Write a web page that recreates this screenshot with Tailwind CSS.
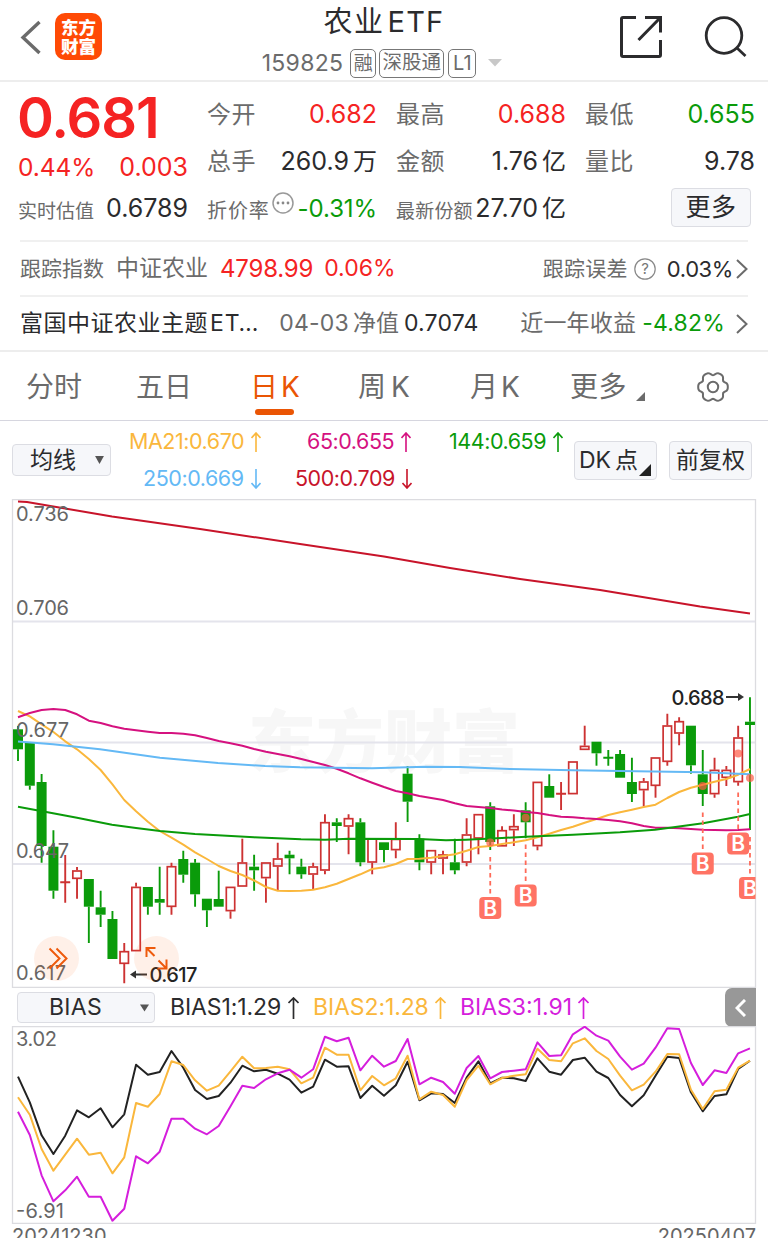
<!DOCTYPE html>
<html lang="zh-CN">
<head>
    <meta charset="UTF-8">
    <meta name="viewport" content="width=device-width, initial-scale=1.0">
    <title>农业ETF 159825</title>
    <script src="https://cdn.jsdelivr.net/npm/@tailwindcss/browser@4"></script>
    <style>
        body {
            font-family: 'Inter', 'Noto Sans CJK SC', sans-serif;
        }
    </style>
</head>
<body class="bg-white text-[#2b2b2d] w-[768px] h-[1238px] overflow-hidden leading-none whitespace-nowrap">

    <!-- Header -->
    <header class="h-[82px] border-b-2 border-[#ededed] flex justify-between">
        <div class="flex items-start pl-[20px] pt-[13px] w-[240px]">
            <svg class="mt-[6px]" width="22" height="36" viewBox="0 0 22 36" fill="none" stroke="#6b6b6b" stroke-width="3.4"><path d="M19.5 3 L3 18.500 L19.500 34"/></svg>
            <div class="ml-[13px] w-[47px] h-[47px] rounded-[10px] bg-[#ff4a05] text-white font-black text-[17.5px] leading-[19px] pt-[5px] text-center">东方<br>财富</div>
        </div>
        <div class="flex flex-col items-center w-[250px]">
            <h1 class="text-[29px] leading-[36px] mt-[4px] flex items-center"><span class="tracking-[1.500px]">农业</span><span class="tracking-[1.200px] ml-[3px]">ETF</span></h1>
            <div class="flex items-center h-[30px] mt-[8px] mr-[4px] text-[#6b6b6b]">
                <span class="text-[23px] tracking-[0.300px]">159825</span>
                <span class="ml-[7px] h-[29px] w-[26px] border border-[#777] rounded-[5px] text-[19px] flex items-center justify-center">融</span>
                <span class="ml-[3px] h-[29px] w-[65px] border border-[#777] rounded-[5px] text-[19.500px] flex items-center justify-center">深股通</span>
                <span class="ml-[4px] h-[29px] w-[28px] border border-[#777] rounded-[5px] text-[20px] flex items-center justify-center">L1</span>
                <svg class="ml-[12px]" width="14" height="8" viewBox="0 0 14 8" fill="#c8c8c8"><path d="M0 0H14L7 7.500z"/></svg>
            </div>
        </div>
        <div class="flex items-start justify-end w-[240px] pt-[15px] pr-[21px]">
            <svg width="44" height="44" viewBox="0 0 44 44" fill="none" stroke="#2b2b2d" stroke-width="3"><path d="M17 2.500H4Q2.500 2.500 2.500 4V40Q2.500 41.500 4 41.500H40Q41.500 41.500 41.500 40V25"/><path d="M26 2.500H41.500V17.500M41 3L19.500 25"/></svg>
            <svg class="ml-[41px]" width="43" height="44" viewBox="0 0 43 44" fill="none" stroke="#2b2b2d" stroke-width="2.800"><circle cx="20" cy="20.500" r="17.800"/><path d="M33 33L41.500 41"/></svg>
        </div>
    </header>

    <!-- Quote -->
    <section class="h-[158px] pl-[19px] pr-[13px] pt-[9px] flex justify-between">
        <div class="w-[169px]">
            <div class="h-[53px] -ml-[2px] flex items-center text-[#f52323] font-semibold text-[56px] tracking-[-1.100px]">0.681</div>
            <div class="h-[47px] -ml-px flex items-center justify-between text-[#f52323]"><span class="text-[24.500px] tracking-[-0.100px]">0.44%</span><span class="text-[25px]">0.003</span></div>
            <div class="h-[34px] -ml-px flex items-center justify-between"><span class="text-[19px] text-[#6b6b6b] pt-[6px]">实时估值</span><span class="text-[25px]">0.6789</span></div>
        </div>
        <div class="w-[170px]">
            <div class="h-[47px] flex items-center justify-between"><span class="text-[24px] tracking-[0.500px] text-[#6b6b6b]">今开</span><span class="text-[25px] text-[#f52323]">0.682</span></div>
            <div class="h-[47px] flex items-center justify-between"><span class="text-[24px] tracking-[0.500px] text-[#6b6b6b]">总手</span><span class="text-[25px]">260.9<span class="text-[24px] ml-[4px]">万</span></span></div>
            <div class="h-[47px] flex items-center"><span class="text-[20px] tracking-[0.900px] text-[#6b6b6b] pt-[5px]">折价率</span>
                <svg class="ml-[2px] -mt-[11px]" width="22" height="22" viewBox="0 0 22 22"><circle cx="11" cy="11" r="10" fill="none" stroke="#999" stroke-width="1.500"/><g fill="#888"><circle cx="6" cy="11" r="1.400"/><circle cx="11" cy="11" r="1.400"/><circle cx="16" cy="11" r="1.400"/></g></svg>
                <span class="ml-auto text-[24px] tracking-[-0.100px] text-[#0a9b0a]">-0.31%</span></div>
        </div>
        <div class="w-[170px]">
            <div class="h-[47px] flex items-center justify-between"><span class="text-[24px] tracking-[0.500px] text-[#6b6b6b]">最高</span><span class="text-[25px] text-[#f52323]">0.688</span></div>
            <div class="h-[47px] flex items-center justify-between"><span class="text-[24px] tracking-[0.500px] text-[#6b6b6b]">金额</span><span class="text-[25px]">1.76<span class="text-[24px] ml-[4px]">亿</span></span></div>
            <div class="h-[47px] flex items-center justify-between"><span class="text-[19px] tracking-[0.200px] text-[#6b6b6b] pt-[6px]">最新份额</span><span class="text-[25px]">27.70<span class="text-[24px] ml-[4px]">亿</span></span></div>
        </div>
        <div class="w-[170px]">
            <div class="h-[47px] flex items-center justify-between"><span class="text-[24px] tracking-[0.500px] text-[#6b6b6b]">最低</span><span class="text-[25px] text-[#0a9b0a]">0.655</span></div>
            <div class="h-[47px] flex items-center justify-between"><span class="text-[24px] tracking-[0.500px] text-[#6b6b6b]">量比</span><span class="text-[25px]">9.78</span></div>
            <div class="h-[45px] flex items-center justify-end pr-[4px]"><button class="w-[80px] h-[39px] bg-[#f6f7fa] border border-[#dcdde3] rounded-[4px] text-[25px] tracking-[0.500px]">更多</button></div>
        </div>
    </section>

    <!-- Tracked index -->
    <section class="mx-[20px] h-[55px] border-t-2 border-[#f0f0f0] flex items-center">
        <span class="text-[21px] text-[#6b6b6b]">跟踪指数</span>
        <span class="ml-[12px] text-[23px] text-[#6b6b6b]">中证农业</span>
        <span class="ml-[12px] text-[24px] tracking-[-0.200px] text-[#f52323]">4798.99</span>
        <span class="ml-[11px] text-[23px] text-[#f52323]">0.06%</span>
        <span class="ml-auto text-[21px] tracking-[0.300px] text-[#6b6b6b]">跟踪误差</span>
        <svg class="ml-[6px]" width="22" height="22" viewBox="0 0 22 22"><circle cx="11" cy="11" r="10.200" fill="none" stroke="#888" stroke-width="1.200"/><text x="11" y="16.300" text-anchor="middle" font-size="15" fill="#777">?</text></svg>
        <span class="ml-[11px] text-[22px] tracking-[-0.400px]">0.03%</span>
        <svg class="ml-[3px]" width="12" height="20" viewBox="0 0 12 20" fill="none" stroke="#6b6b6b" stroke-width="2"><path d="M1 1L10.500 10L1 19"/></svg>
    </section>

    <!-- Fund -->
    <section class="h-[57px] border-b-2 border-[#ededed]">
        <div class="mx-[20px] h-[55px] border-t-2 border-[#f0f0f0] flex items-center">
            <span class="text-[23px] tracking-[0.500px]">富国中证农业主题</span><span class="ml-[2px] text-[23px] tracking-[0.900px]">ET…</span>
            <span class="ml-[20px] text-[23px] text-[#6b6b6b]"><span class="tracking-[0.200px]">04-03</span><span class="ml-[4px]">净值</span></span>
            <span class="ml-[5px] text-[23px] tracking-[0.200px]">0.7074</span>
            <span class="ml-auto text-[23px] tracking-[0.200px] text-[#6b6b6b]">近一年收益</span>
            <span class="ml-[6px] text-[23px] tracking-[0.200px] text-[#0a9b0a]">-4.82%</span>
            <svg class="ml-[11px]" width="12" height="20" viewBox="0 0 12 20" fill="none" stroke="#6b6b6b" stroke-width="2"><path d="M1 1L10.500 10L1 19"/></svg>
        </div>
    </section>

    <!-- Period tabs -->
    <nav class="h-[69px] pt-[2px] border-b border-[#d6d6df] flex items-center text-[28px] text-[#6b6b6b]">
        <span class="ml-[26px] w-[110px]">分时</span>
        <span class="w-[114px]">五日</span>
        <span class="relative w-[108px] text-[#ea5504]">日<span class="ml-[3px]">K</span><span class="absolute left-[5px] top-[36px] w-[39px] h-[6px] rounded-full bg-[#ea5504]"></span></span>
        <span class="w-[112px]">周<span class="ml-[5px]">K</span></span>
        <span class="w-[100px]">月<span class="ml-[3px]">K</span></span>
        <span class="tracking-[0.500px]">更多</span>
        <svg class="ml-[9px] mt-[18px]" width="9" height="9" viewBox="0 0 9 9" fill="#6b6b6b"><path d="M9 0V9H0z"/></svg>
        <svg class="ml-[51px]" width="34" height="34" viewBox="-17 -17 34 34" fill="none" stroke="#6b6b6b" stroke-width="2"><path id="gear" d=""/><circle r="5.200"/></svg>
    </nav>

    <!-- Moving averages -->
    <section class="h-[78px] flex items-center pl-[12px]">
        <div class="w-[99px] h-[32px] bg-[#f6f7fa] border border-[#dcdde3] rounded-[4px] flex items-center justify-between pl-[17px] pr-[6px] text-[23px]">均线
            <svg width="9" height="8" viewBox="0 0 10 9" fill="#555"><path d="M0 0H10L5 9z"/></svg></div>
        <div class="w-[454px] text-[21.500px] tracking-[-0.450px] mr-[9px]">
            <div class="h-[37px] flex items-center">
                <span class="ml-[18px] w-[178px] text-[#fab73c] flex items-center">MA21:0.670<svg class="ml-[7px]" width="10" height="20" viewBox="0 0 10 20" fill="none" stroke="currentColor" stroke-width="1.600"><path d="M5 20V1M0.500 6L5 1L9.500 6"/></svg></span>
                <span class="w-[142px] text-[#d5117f] flex items-center">65:0.655<svg class="ml-[7px]" width="10" height="20" viewBox="0 0 10 20" fill="none" stroke="currentColor" stroke-width="1.600"><path d="M5 20V1M0.500 6L5 1L9.500 6"/></svg></span>
                <span class="text-[#0a9b0a] flex items-center">144:0.659<svg class="ml-[7px]" width="10" height="20" viewBox="0 0 10 20" fill="none" stroke="currentColor" stroke-width="1.600"><path d="M5 20V1M0.500 6L5 1L9.500 6"/></svg></span>
            </div>
            <div class="h-[37px] flex items-center">
                <span class="ml-[32px] w-[152px] text-[#64b9f5] flex items-center">250:0.669<svg class="ml-[7px]" width="10" height="20" viewBox="0 0 10 20" fill="none" stroke="currentColor" stroke-width="1.600"><path d="M5 0V19M0.500 14L5 19L9.500 14"/></svg></span>
                <span class="text-[#c8142a] flex items-center">500:0.709<svg class="ml-[7px]" width="10" height="20" viewBox="0 0 10 20" fill="none" stroke="currentColor" stroke-width="1.600"><path d="M5 0V19M0.500 14L5 19L9.500 14"/></svg></span>
            </div>
        </div>
        <div class="relative w-[83px] h-[39px] bg-[#f6f7fa] border border-[#dcdde3] rounded-[4px] flex items-center pl-[4px] text-[23px]">DK<span class="ml-[4px]">点</span>
            <svg class="absolute right-[5px] bottom-[3px]" width="12" height="12" viewBox="0 0 11 11" fill="#222"><path d="M11 0V11H0z"/></svg></div>
        <div class="ml-[12px] w-[83px] h-[39px] bg-[#f6f7fa] border border-[#dcdde3] rounded-[4px] flex items-center justify-center text-[23px]">前复权</div>
    </section>

    <!-- Candlestick chart -->
    <svg class="block" width="768" height="489" viewBox="0 499 768 489">
        <defs><clipPath id="plot"><rect x="12" y="499" width="743.500" height="489"/></clipPath></defs>
        <text x="248" y="767" font-size="68" font-weight="900" textLength="272" fill="#f7f7f7">东方财富</text>
        <g stroke="#e4e4ec" stroke-width="2"><path d="M12 621.500H756M12 742.500H756M12 864H756"/></g>
        <path d="M12.500 987.500V499.500H755.500V987.500z" fill="none" stroke="#dcdce0" stroke-width="1.300"/>
        <g id="candles"></g>
        <g id="averages" fill="none" stroke-width="2" stroke-linejoin="round"></g>
        <g font-size="20" fill="#666">
            <text x="16" y="520.500" textLength="53">0.736</text>
            <text x="16" y="615" textLength="53">0.706</text>
            <text x="16" y="737" textLength="53">0.677</text>
            <text x="16" y="858" textLength="53">0.647</text>
            <text x="16" y="980" textLength="50">0.617</text>
        </g>
        <g id="signals" clip-path="url(#plot)"></g>
        <g font-size="20" font-weight="500" fill="#222">
            <text x="671.500" y="704.500" textLength="53">0.688</text>
            <text x="149.500" y="982" textLength="48">0.617</text>
        </g>
        <g stroke="#333" stroke-width="1.800" fill="#333"><path d="M726 697H739M147 974.500H135"/><path d="M738 693L744 697L738 701zM136 970.500L130 974.500L136 978.500z" stroke="none"/></g>
        <g fill="#fb6a20" fill-opacity="0.1"><circle cx="56.500" cy="958.500" r="22.500"/><circle cx="156.500" cy="958.500" r="22.500"/></g>
        <g fill="none" stroke="#ee5a0c" stroke-width="2"><path d="M49.500 948.500L59.500 958.500L49.500 968.500M56.500 948.500L66.500 958.500L56.500 968.500"/><path d="M146.500 957V948H155.500M146.500 948L154.500 956M166.500 959.500V968.500H157.500M166.500 968.500L158.500 960.500"/></g>
    </svg>

    <!-- BIAS bar -->
    <section class="h-[38px] pl-[17px] pr-[12px] pt-px flex items-center">
        <div class="w-[138px] h-[31px] bg-[#f6f7fa] border border-[#dcdde3] rounded-[4px] flex items-center justify-between pl-[31px] pr-[5px] text-[23px] tracking-[0.300px]">BIAS
            <svg width="9" height="8" viewBox="0 0 10 8" fill="#555"><path d="M0 0H10L5 8z"/></svg></div>
        <span class="ml-[15px] w-[143px] text-[23px] tracking-[-0.100px] flex items-center">BIAS1:1.29<svg class="ml-[7px]" width="11" height="22" viewBox="0 0 11 22" fill="none" stroke="currentColor" stroke-width="1.700"><path d="M5.500 22V1M0.500 6L5.500 1L10.500 6"/></svg></span>
        <span class="w-[147px] text-[23px] tracking-[-0.100px] text-[#fab73c] flex items-center">BIAS2:1.28<svg class="ml-[6px]" width="11" height="22" viewBox="0 0 11 22" fill="none" stroke="currentColor" stroke-width="1.700"><path d="M5.500 22V1M0.500 6L5.500 1L10.500 6"/></svg></span>
        <span class="text-[23px] text-[#d51edc] flex items-center">BIAS3:1.91<svg class="ml-[6px]" width="11" height="22" viewBox="0 0 11 22" fill="none" stroke="currentColor" stroke-width="1.700"><path d="M5.500 22V1M0.500 6L5.500 1L10.500 6"/></svg></span>
        <div class="ml-auto w-[31px] h-[39px] rounded-l-[7px] bg-[#989898] flex items-center justify-center">
            <svg width="11" height="18" viewBox="0 0 11 18" fill="none" stroke="#fff" stroke-width="3"><path d="M10 1L2 9L10 17"/></svg></div>
    </section>

    <!-- BIAS chart -->
    <svg class="block" width="768" height="198" viewBox="0 1026 768 198">
        <path d="M12.500 1223.300V1026.500H755.500V1223.300z" fill="none" stroke="#dcdce0" stroke-width="1.300"/>
        <g font-size="20" fill="#666">
            <text x="16" y="1046" textLength="41">3.02</text>
            <text x="16" y="1218" textLength="48">-6.91</text>
        </g>
        <g id="bias" fill="none" stroke-width="2" stroke-linejoin="round"></g>
    </svg>
    <div class="h-[14px] pl-[12px] pr-[12px] pt-[2px] overflow-hidden flex justify-between text-[20px] text-[#666]">
        <span>20241230</span><span>20250407</span>
    </div>

    <script>
        const NS = 'http://www.w3.org/2000/svg';
        const STEP = 11.806;
        const GREEN = '#0a9b0a';
        const RED = '#cd3232';

        function x(i) {
            return 18 + i * STEP;
        }

        function add(parent, tag, attrs, text) {
            const el = document.createElementNS(NS, tag);
            for (const key in attrs) el.setAttribute(key, attrs[key]);
            if (text) el.textContent = text;
            document.getElementById(parent).appendChild(el);
        }

        // [direction, body top, body bottom, high, low]
        const candles = [
            [-1, 729.3, 749.3, 726, 761], [-1, 742.3, 785.7, 742.3, 789.7], [-1, 782, 846, 774, 862.7],
            [-1, 846.7, 890.7, 830.3, 898.7], [1, 882.3, 882.3, 855, 902.7], [1, 870.3, 879, 867, 898.7],
            [-1, 879, 906.7, 879, 943], [-1, 907.3, 914.7, 890.7, 927], [-1, 919, 959, 911, 959],
            [1, 951, 964, 943, 983.3], [1, 886.7, 951.3, 882.7, 951.3], [-1, 887, 906.7, 887, 914.7],
            [-1, 899, 902.7, 866.7, 914.7], [1, 866, 907, 862.7, 914.7], [-1, 859, 874.7, 850.7, 882.7],
            [-1, 862.7, 894.3, 859, 906.7], [-1, 898.7, 910.3, 898.7, 927], [-1, 899, 906.7, 870.7, 906.7],
            [1, 886.7, 911.3, 886.7, 918.7], [1, 862.3, 886.7, 838.7, 886.7], [-1, 866.7, 870.3, 854.7, 890.7],
            [1, 862.3, 878.3, 862.3, 902.7], [1, 858.3, 866.7, 842.7, 890.3], [-1, 854.7, 858.3, 850.7, 874.3],
            [-1, 866.7, 874.3, 858.7, 878.7], [1, 866.3, 874.7, 862.7, 890], [1, 822, 870.7, 814.3, 874.3],
            [-1, 822.3, 826, 818.3, 842], [1, 818, 826.7, 814.3, 854.3], [-1, 822.3, 862.3, 818.3, 866.3],
            [1, 838.3, 862.7, 838.3, 874.3], [-1, 842.3, 850, 842.3, 862.3], [1, 838.7, 850.3, 822.3, 858.3],
            [-1, 773.7, 801.7, 766, 822], [-1, 838.7, 862.3, 834.3, 870.3], [1, 850, 862.7, 850, 874.3],
            [1, 854.3, 858.7, 850.7, 874.3], [-1, 862.3, 870.3, 838.7, 874.3], [1, 834.3, 862.7, 818.3, 866.3],
            [1, 814, 838.7, 814, 854.3], [-1, 806.3, 842, 802.3, 850], [1, 830, 846.5, 826.3, 846.5],
            [1, 826, 830.3, 814.3, 846], [-1, 810.3, 822.3, 802.3, 838.3], [1, 781.7, 846.3, 781.7, 850.3],
            [-1, 786, 797.7, 774.3, 797.7], [1, 793.7, 793.7, 782, 810], [1, 761.3, 794.3, 761.3, 794.3],
            [1, 745.7, 750, 725.7, 750], [-1, 741.7, 753.3, 741.7, 765.7], [-1, 757.7, 757.7, 750, 765.7],
            [-1, 754, 777.7, 750, 777.7], [-1, 782, 794, 757.7, 802], [1, 781.3, 790.3, 778, 806.3],
            [1, 757.3, 786, 757.3, 797.7], [1, 725.3, 762, 713.7, 765.7], [1, 721, 733.7, 717.3, 745.3],
            [-1, 725.7, 765.3, 725.7, 773.7], [-1, 774.3, 794, 750, 806], [1, 769.7, 794.3, 757.7, 797.7],
            [1, 769.7, 778, 766, 786], [1, 737.3, 782.3, 725.7, 785.7], [-1, 721.7, 725, 697.3, 830]
        ];
        candles.forEach(([dir, top, bottom, high, low], i) => {
            const color = dir > 0 ? RED : GREEN;
            if (top === bottom) {
                add('candles', 'path', { d: `M${x(i) - 5} ${top}H${x(i) + 5}M${x(i)} ${high}V${low}`, stroke: color, 'stroke-width': 1.9 });
                return;
            }
            add('candles', 'path', { d: `M${x(i)} ${high}V${top}M${x(i)} ${bottom}V${low}`, stroke: color, 'stroke-width': 1.9 });
            if (dir > 0) {
                add('candles', 'rect', { x: x(i) - 4.2, y: top + 0.7, width: 8.4, height: Math.max(bottom - top - 1.4, 1), fill: 'none', stroke: color, 'stroke-width': 1.7 });
            } else {
                add('candles', 'rect', { x: x(i) - 5, y: top, width: 10, height: bottom - top, fill: color });
            }
        });

        function line(parent, color, points) {
            add(parent, 'polyline', { stroke: color, points: points.map(p => p.join(',')).join(' ') });
        }

        const ma21 = [711, 716.3, 724.3, 732, 741.3, 749.3, 759, 770, 784.3, 800, 811.3, 821.7, 831, 837.7, 844.7, 852.3, 859, 866, 871, 875, 880.5, 887, 890.7, 891, 890.7, 889.7, 887.3, 883.7, 879, 874.3, 869, 867.3, 864, 859, 858.7, 857.7, 856, 854.3, 850.7, 847, 846, 844, 842.3, 840.3, 837.3, 833.7, 830, 826.7, 822.7, 819, 815, 812.3, 809.7, 807, 804.7, 798, 792, 787.7, 784.7, 781.7, 779, 774.7, 769];
        const ma65 = [717.3, 713, 710, 709, 710, 714.3, 720.7, 723, 726.3, 728.7, 730.3, 731.7, 733, 733, 733.7, 735.3, 738, 741, 743.3, 745.7, 749, 751.7, 754, 756.3, 759, 762, 765, 768.7, 773.3, 778.3, 782.7, 787, 791, 793.3, 796, 798, 800, 803.3, 806, 807, 808, 809.5, 810.5, 812, 813, 815, 816.7, 817.3, 818.3, 819, 820, 821.3, 823.3, 826, 827.7, 827.7, 828.3, 829, 829.7, 830, 830.3, 830, 829.3];
        line('averages', '#c8142a', [[18, 501.5], [27, 502], [112, 516.5], [200, 529], [300, 544], [384, 556.5], [450, 568], [520, 579], [600, 590], [700, 606.5], [750, 613.5]]);
        line('averages', '#fab73c', ma21.map((y, i) => [x(i), y]));
        line('averages', '#d5117f', ma65.map((y, i) => [x(i), y]));
        line('averages', '#64b9f5', [[18, 741.5], [53, 744.3], [100, 749.3], [160, 757.7], [218, 763], [265, 766], [300, 767.3], [372, 768.3], [425, 766.7], [460, 767], [510, 769], [573, 770.3], [620, 771], [703, 772.3], [738, 773.7], [750, 774.3]]);
        line('averages', GREEN, [[18, 806.7], [53, 813.3], [77, 817.7], [112, 824.7], [136, 828], [160, 831], [195, 834], [254, 837.3], [301, 839.3], [325, 839.7], [349, 838.7], [419, 839], [446, 840.3], [466, 839.7], [502, 838], [526, 836.7], [573, 834.7], [620, 832.3], [655, 829.7], [703, 823.3], [738, 816.7], [750, 814]]);

        // Buy signals: candle index, dot y, badge top
        [[40, 842.5, 897], [43, 817.7, 884.5], [58, 786, 852.5], [61, 753.5, 832.5], [62, 778, 877]].forEach(([i, dot, top]) => {
            add('signals', 'circle', { cx: x(i), cy: dot, r: 4, fill: '#ff5a46', 'fill-opacity': 0.7 });
            add('signals', 'path', { d: `M${x(i)} ${top - 40}V${top - 3}`, stroke: '#ff6a58', 'stroke-width': 1.8, 'stroke-dasharray': '4.5 3.5' });
            add('signals', 'rect', { x: x(i) - 11, y: top, width: 22, height: 22, rx: 4, fill: '#ff7364' });
            add('signals', 'text', { x: x(i), y: top + 18.5, 'text-anchor': 'middle', 'font-size': 21, 'font-weight': 600, fill: '#fff' }, 'B');
        });

        const bias = {
            '#222222': [290, 367, 466, 522, 467, 391, 412, 385, 442, 403, 254, 284, 276, 213, 263, 330, 357, 348, 308, 257, 274, 269, 281, 299, 338, 320, 239, 260, 259, 354, 317, 347, 316, 245, 361, 340, 342, 369, 293, 244, 310, 293, 295, 303, 235, 275, 284, 240, 233, 275, 294, 345, 379, 346, 287, 230, 234, 337, 394, 348, 343, 267, 242],
            '#fab73c': [352, 404, 507, 572, 524, 476, 524, 518, 580, 532, 369, 380, 342, 244, 255, 301, 332, 317, 274, 230, 265, 264, 260, 268, 310, 293, 203, 224, 224, 331, 288, 316, 295, 227, 358, 335, 345, 380, 300, 257, 313, 294, 287, 283, 206, 240, 244, 190, 175, 213, 237, 287, 331, 314, 275, 222, 223, 329, 387, 334, 329, 263, 242],
            '#d51edc': [395, 465, 586, 664, 631, 590, 650, 650, 722, 686, 529, 550, 515, 416, 416, 446, 463, 438, 379, 317, 324, 298, 280, 269, 293, 268, 170, 184, 173, 271, 227, 260, 243, 177, 313, 293, 306, 341, 264, 228, 295, 276, 272, 268, 187, 228, 226, 163, 140, 167, 182, 230, 269, 251, 203, 145, 147, 249, 315, 271, 279, 220, 205]
        };
        for (const color in bias) {
            line('bias', color, bias[color].map((v, i) => [x(i), (980 + v / 3).toFixed(1)]));
        }

        // Six-lobed gear outline
        let gear = '';
        for (let a = 0; a < 360; a += 5) {
            const t = a * Math.PI / 180;
            const r = 13.7 + 1.5 * Math.cos(6 * t) - 0.4 * Math.cos(12 * t);
            gear += (a ? 'L' : 'M') + (r * Math.cos(t)).toFixed(2) + ' ' + (r * Math.sin(t)).toFixed(2);
        }
        document.getElementById('gear').setAttribute('d', gear + 'z');
    </script>
</body>
</html>
